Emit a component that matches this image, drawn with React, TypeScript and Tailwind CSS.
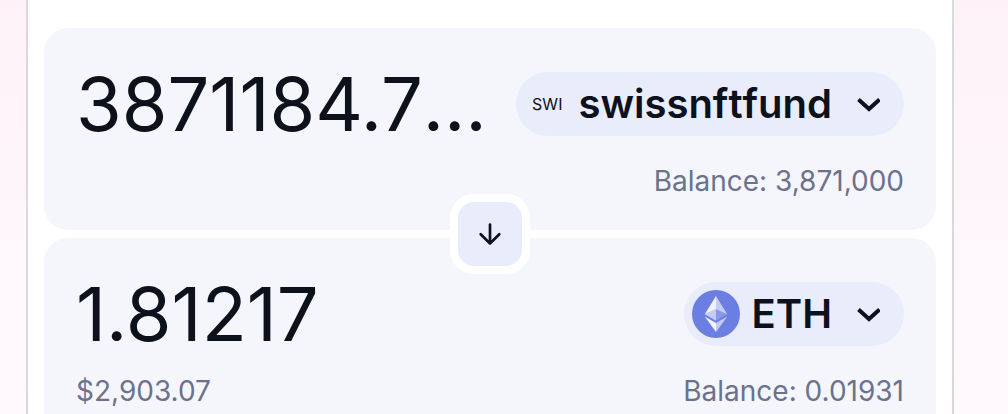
import type { ReactNode } from "react";

function Chevron() {
  return (
    <svg className="h-6 w-6 shrink-0" viewBox="0 0 24 24" fill="none" stroke="#0d111c" strokeWidth="4" aria-hidden="true">
      <path d="M2.500 7.500 13 17 23.500 7.500" />
    </svg>
  );
}

function EthLogo() {
  return (
    <svg className="h-12 w-12 shrink-0" viewBox="0 0 32 32" aria-hidden="true">
      <circle cx="16" cy="16" r="16" fill="#6b7fe3" />
      <g fill="#fff" fillRule="nonzero">
        <path fillOpacity=".602" d="M16 4v8.870l7.497 3.350z" />
        <path fillOpacity=".9" d="M16 4L8.500 16.220 16 12.870z" />
        <path fillOpacity=".602" d="M16 21.968v6.027L23.500 17.616z" />
        <path fillOpacity=".9" d="M16 27.995v-6.028L8.500 17.616z" />
        <path fillOpacity=".2" d="M16 20.573l7.497-4.353L16 12.872z" />
        <path fillOpacity=".602" d="M8.500 16.220l7.500 4.353v-7.701z" />
      </g>
    </svg>
  );
}

function Panel({ label, value, token, usd, balance }: { label: string; value: ReactNode; token: ReactNode; usd?: string; balance: string }) {
  return (
    <section aria-label={label} className="rounded-3xl bg-[#f5f6fc] px-8 pt-11 pb-8">
      <div className="flex h-16 items-center justify-between gap-7">
        {value}
        {token}
      </div>
      <div className="mt-7 flex items-center justify-between text-[28px] leading-[34px] text-[#6b728c]">
        <span>{usd}</span>
        <span>{balance}</span>
      </div>
    </section>
  );
}

const amountClass = "h-20 min-w-0 flex-1 truncate bg-transparent text-[74px] leading-20 text-[#0d111c] outline-none";
const tokenClass = "flex h-16 shrink-0 items-center rounded-full bg-[#e8ecfb] text-[40px] font-semibold text-[#0d111c]";

export default function App() {
  return (
    <div className="h-screen overflow-hidden bg-linear-to-b from-[#fef2f8] to-[#fef9fd] pr-[54px] pl-[26px] font-['Inter',sans-serif]">
      <main className="min-h-screen border-x-2 border-[#d9d8dc] bg-white px-4 pt-7">
        <Panel
          label="Sell"
          value={<input aria-label="Sell amount" className={amountClass} defaultValue="3871184.72519" />}
          token={
            <button className={`${tokenClass} pr-6 pl-4`}>
              <span className="mr-4 text-base font-normal">SWI</span>
              <span className="mr-6 [font-kerning:none]">swissnftfund</span>
              <Chevron />
            </button>
          }
          balance="Balance: 3,871,000"
        />
        <div className="relative z-10 -my-9 flex justify-center">
          <button aria-label="Switch tokens" className="flex h-20 w-20 items-center justify-center rounded-3xl border-8 border-white bg-[#e8ecfb]">
            <svg className="h-8 w-8" viewBox="0 0 32 32" fill="none" stroke="#0d111c" strokeWidth="2.700" strokeLinecap="round" strokeLinejoin="round" aria-hidden="true">
              <path d="M16 6.500v19M6.700 16.200 16 25.500l9.300-9.300" />
            </svg>
          </button>
        </div>
        <Panel
          label="Buy"
          value={<input aria-label="Buy amount" className={amountClass} defaultValue="1.81217" />}
          token={
            <button className={`${tokenClass} pr-6 pl-2`}>
              <EthLogo />
              <span className="mr-6 ml-3">ETH</span>
              <Chevron />
            </button>
          }
          usd="$2,903.07"
          balance="Balance: 0.01931"
        />
      </main>
    </div>
  );
}
